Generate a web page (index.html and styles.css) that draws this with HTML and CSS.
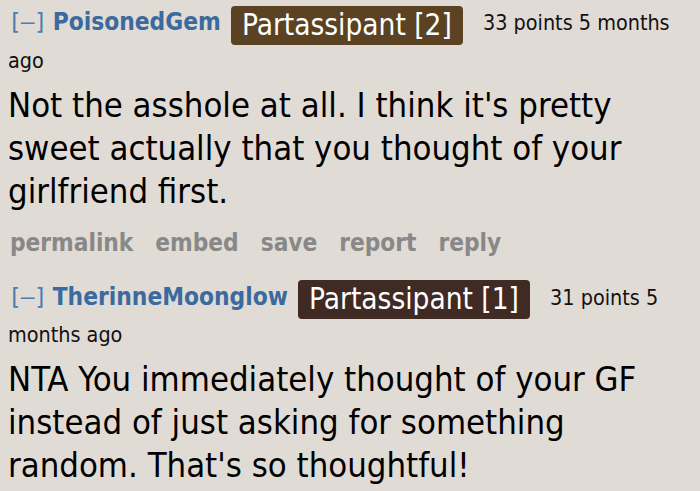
FILE: index.html
```html
<!DOCTYPE html>
<html>
<head>
<meta charset="utf-8">
<link rel="stylesheet" href="styles.css">
</head>
<body>
<div class="comment">
  <p class="tagline"><a class="expand">[–]</a> <a class="author">PoisonedGem</a> <span class="flair flair-a">Partassipant [2]</span> <span class="score">33 points</span> <time>5 months ago</time></p>
  <div class="md"><p>Not the asshole at all. I think it's pretty sweet actually that you thought of your girlfriend first.</p></div>
  <ul class="buttons"><li>permalink</li><li>embed</li><li>save</li><li>report</li><li>reply</li></ul>
</div>
<div class="comment">
  <p class="tagline"><a class="expand">[–]</a> <a class="author">TherinneMoonglow</a> <span class="flair flair-b">Partassipant [1]</span> <span class="score">31 points</span> <time>5 months ago</time></p>
  <div class="md"><p>NTA You immediately thought of your GF instead of just asking for something random. That's so thoughtful!</p></div>
</div>
</body>
</html>
```
FILE: styles.css
```css
html, body {
  margin: 0;
  padding: 0;
  background: #e1dbd5;
}
body {
  font-family: "DejaVu Sans Condensed", "DejaVu Sans", Verdana, sans-serif;
  font-stretch: condensed;
  color: #000;
  padding: 3px 8px 0 8px;
}
.tagline {
  margin: 0;
  font-size: 21.4px;
  line-height: 37px;
  color: #111;
}
.expand {
  font-family: "DejaVu Sans Mono", "Liberation Mono", monospace;
  font-stretch: normal;
  font-size: 23px;
  color: #4f7db0;
  letter-spacing: -1px;
}
.author {
  color: #3a6a9e;
  font-weight: bold;
  font-size: 24.3px;
  margin-right: 4px;
}
.flair {
  display: inline-block;
  color: #fff;
  font-size: 29.5px;
  line-height: 39px;
  height: 39px;
  padding: 0 11px;
  border-radius: 4px;
  vertical-align: middle;
  margin: -2px 14px -2px 0;
  position: relative;
  top: 1px;
}
.flair-a { background: #5b4222; }
.flair-b { background: #3f2b24; }
.md p {
  margin: 0;
  font-size: 34.4px;
  line-height: 43px;
  padding-top: 5px;
}
.buttons {
  list-style: none;
  margin: 0;
  padding: 15px 0 20px 2px;
  display: flex;
  gap: 22px;
  font-weight: bold;
  font-size: 24.2px;
  color: #888;
  line-height: 30px;
}
```
